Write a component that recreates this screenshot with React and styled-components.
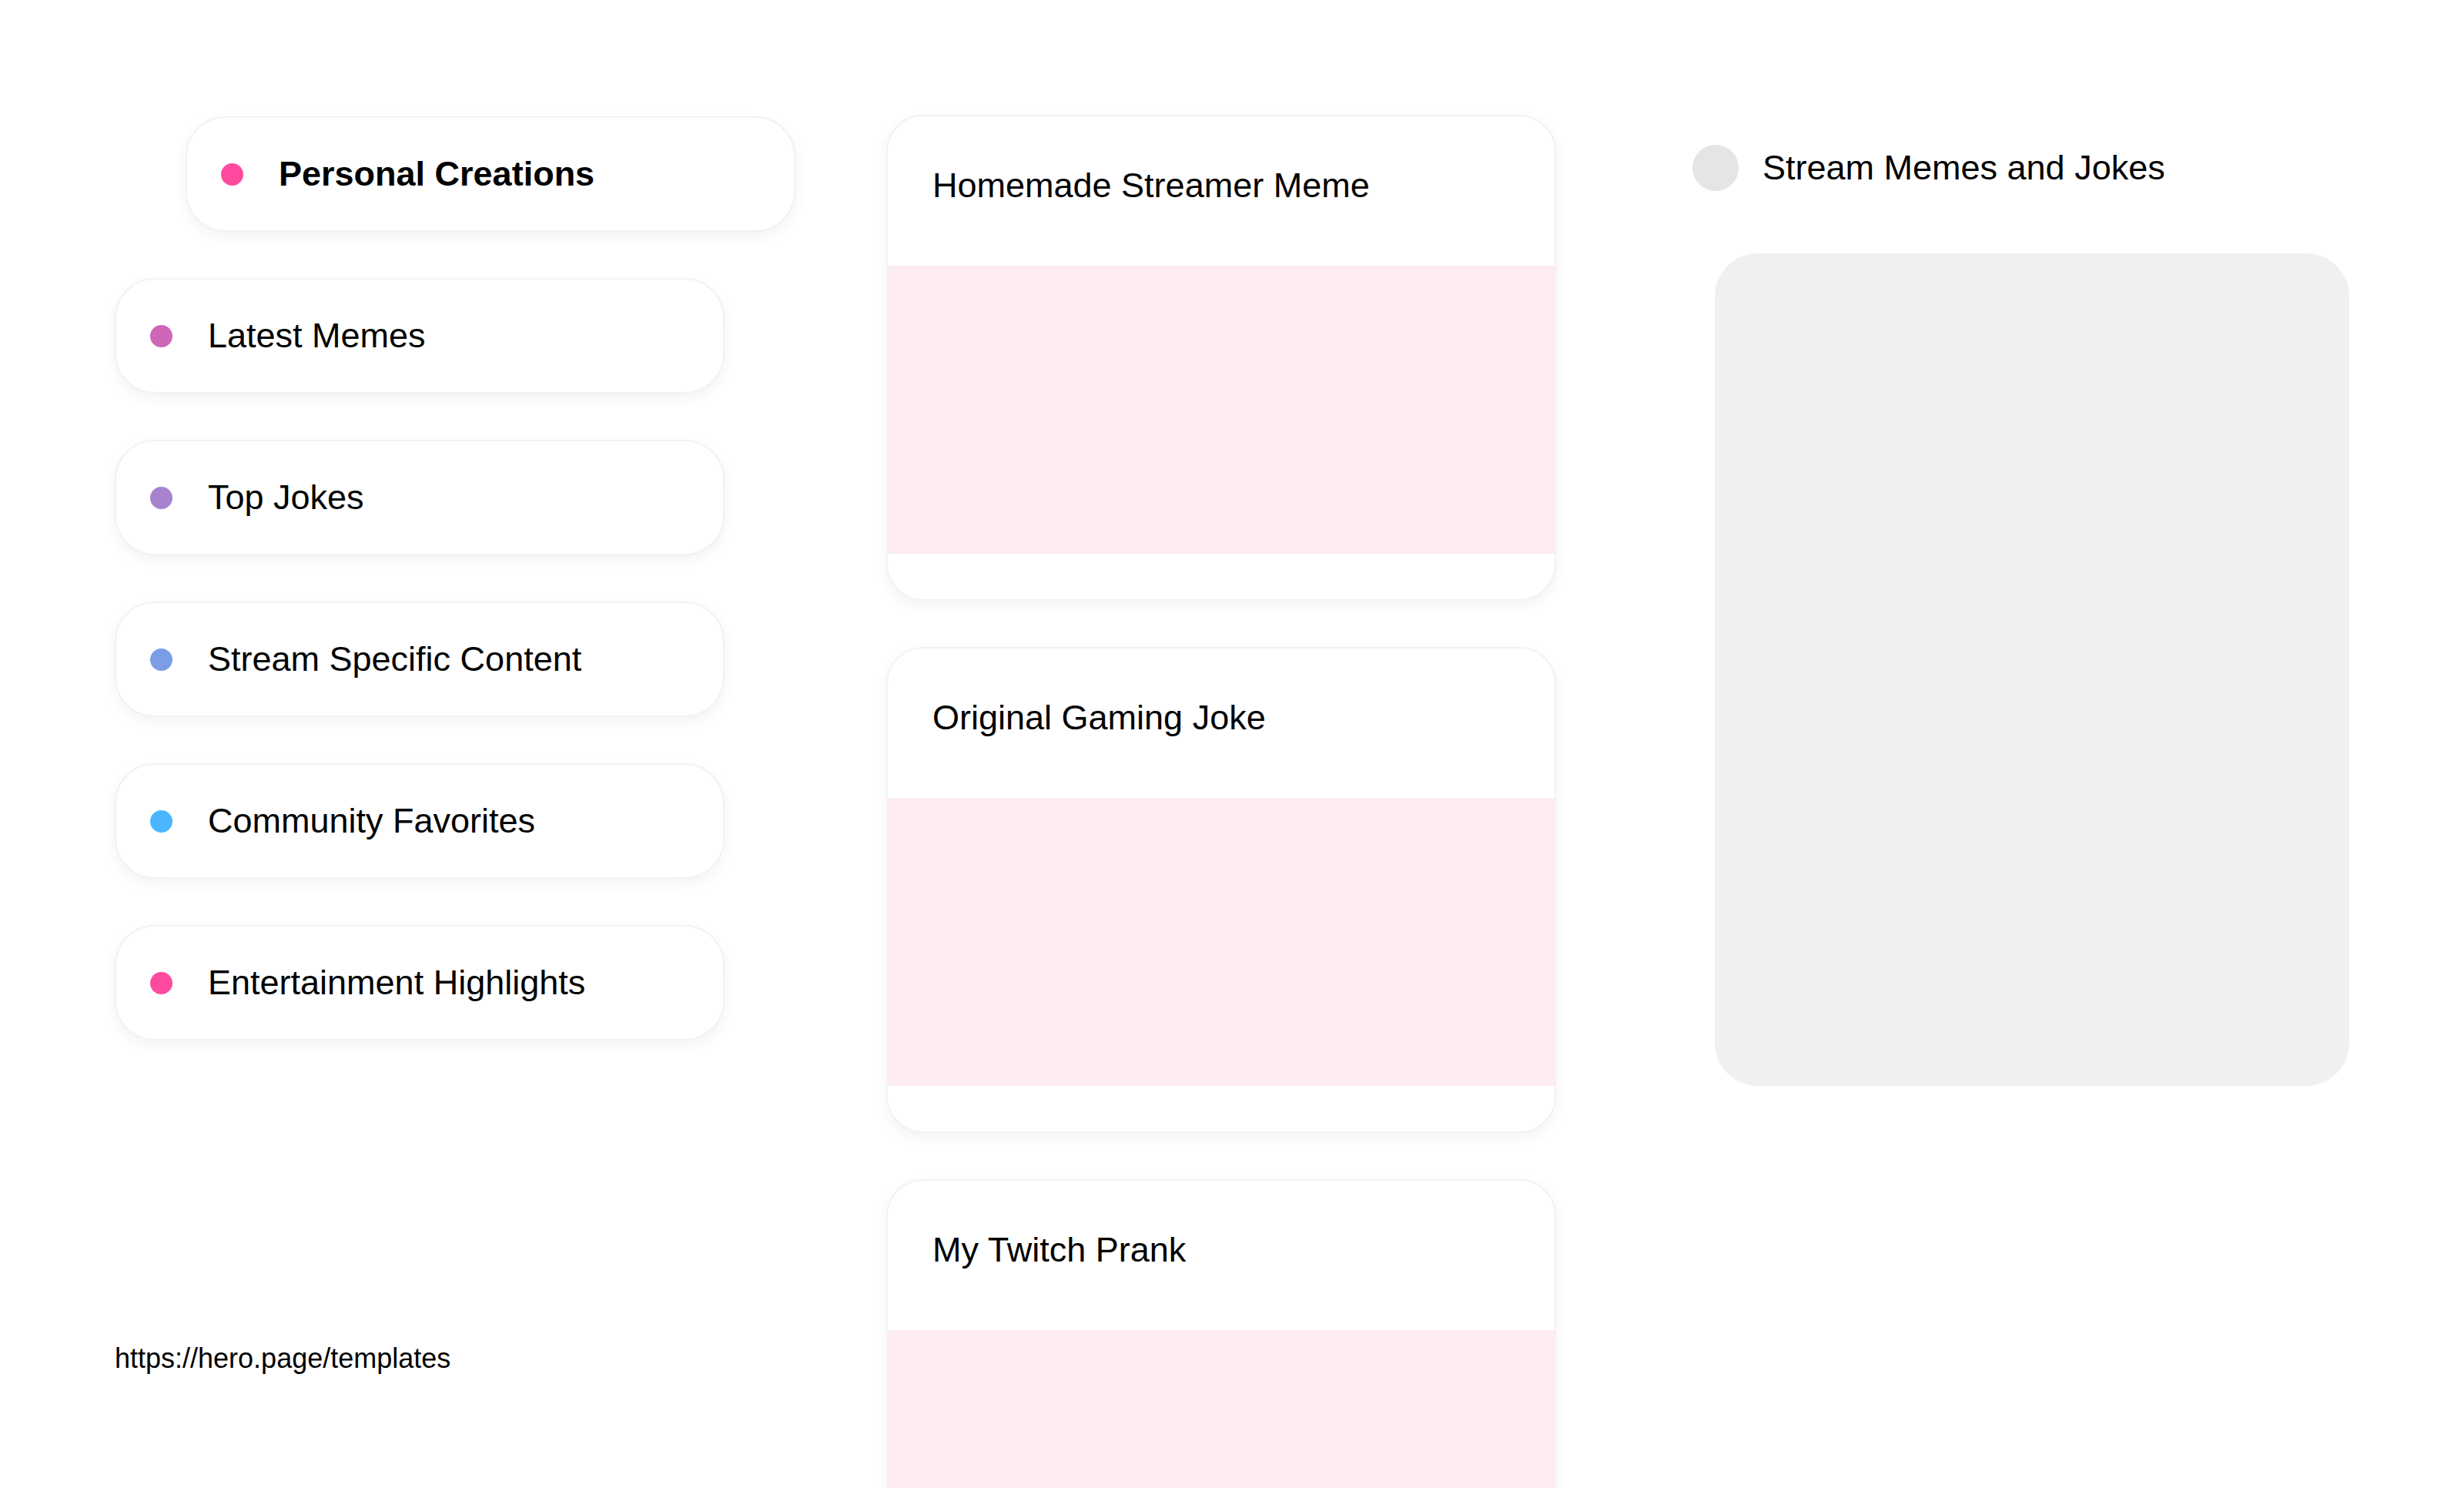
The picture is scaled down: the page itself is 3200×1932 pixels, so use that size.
import styled, { createGlobalStyle } from 'styled-components';

const GlobalStyle = createGlobalStyle`
  html, body {
    margin: 0;
    padding: 0;
    background: #ffffff;
    overflow: hidden;
  }
  body {
    font-family: "Liberation Sans", Arial, sans-serif;
    color: #000000;
  }
`;

const categories = [
  { label: 'Personal Creations', color: '#ff4a9f', active: true },
  { label: 'Latest Memes', color: '#d066b8' },
  { label: 'Top Jokes', color: '#a783cf' },
  { label: 'Stream Specific Content', color: '#7a9de6' },
  { label: 'Community Favorites', color: '#4bb6ff' },
  { label: 'Entertainment Highlights', color: '#ff4a9f' }
];

const posts = [
  { id: 1, title: 'Homemade Streamer Meme' },
  { id: 2, title: 'Original Gaming Joke' },
  { id: 3, title: 'My Twitch Prank' }
];

const Page = styled.div`
  display: grid;
  grid-template-columns: 1002px 870px 1fr;
  align-items: start;
  padding: 149px 149px 0 149px;
  height: 1932px;
  box-sizing: border-box;
  overflow: hidden;
`;

const Sidebar = styled.nav`
  display: flex;
  flex-direction: column;
  gap: 60px;
  padding-top: 2px;
`;

const Pill = styled.div`
  display: flex;
  align-items: center;
  gap: 46px;
  box-sizing: border-box;
  width: 792px;
  height: 150px;
  padding-left: 44px;
  margin-left: ${(p) => (p.$active ? '92px' : '0')};
  background: #ffffff;
  border: 2px solid #f2f2f2;
  border-radius: 52px;
  box-shadow: 0 6px 18px rgba(0, 0, 0, 0.05);
  font-size: 45px;
  font-weight: ${(p) => (p.$active ? 700 : 400)};
`;

const Dot = styled.span`
  flex: none;
  width: 29px;
  height: 29px;
  border-radius: 50%;
  background: ${(p) => p.$color};
`;

const FooterLink = styled.a`
  margin-top: 332px;
  font-size: 36px;
  line-height: 41px;
  color: #000000;
  text-decoration: none;
`;

const Feed = styled.main`
  display: flex;
  flex-direction: column;
  gap: 60px;
`;

const Card = styled.article`
  flex: none;
  display: flex;
  flex-direction: column;
  height: 631px;
  box-sizing: border-box;
  background: #ffffff;
  border: 2px solid #f2f2f2;
  border-radius: 48px;
  box-shadow: 0 6px 18px rgba(0, 0, 0, 0.05);
  overflow: hidden;
`;

const CardHeader = styled.div`
  flex: none;
  height: 194px;
  box-sizing: border-box;
  padding: 63px 58px 0;
`;

const CardTitle = styled.h3`
  margin: 0;
  font-size: 45px;
  font-weight: 400;
  line-height: 53px;
`;

const CardMedia = styled.div`
  flex: none;
  height: 374px;
  background: #fdecf4;
`;

const Aside = styled.aside`
  display: flex;
  flex-direction: column;
  padding-left: 177px;
`;

const AsideHeader = styled.div`
  display: flex;
  align-items: center;
  gap: 31px;
  height: 138px;
  font-size: 45px;
`;

const Avatar = styled.span`
  flex: none;
  width: 60px;
  height: 60px;
  border-radius: 50%;
  background: #e5e5e5;
`;

const Preview = styled.div`
  margin: 42px 0 0 29px;
  width: 824px;
  height: 1081px;
  background: #f0f0f0;
  border-radius: 56px;
`;

const App = () => {
  return (
    <>
      <GlobalStyle />
      <Page>
        <Sidebar>
          {categories.map((c) => (
            <Pill key={c.label} $active={c.active}>
              <Dot $color={c.color} />
              {c.label}
            </Pill>
          ))}
          <FooterLink href="https://hero.page/templates">https://hero.page/templates</FooterLink>
        </Sidebar>

        <Feed>
          {posts.map((post) => (
            <Card key={post.id}>
              <CardHeader>
                <CardTitle>{post.title}</CardTitle>
              </CardHeader>
              <CardMedia />
            </Card>
          ))}
        </Feed>

        <Aside>
          <AsideHeader>
            <Avatar />
            Stream Memes and Jokes
          </AsideHeader>
          <Preview />
        </Aside>
      </Page>
    </>
  );
};

export default App;
